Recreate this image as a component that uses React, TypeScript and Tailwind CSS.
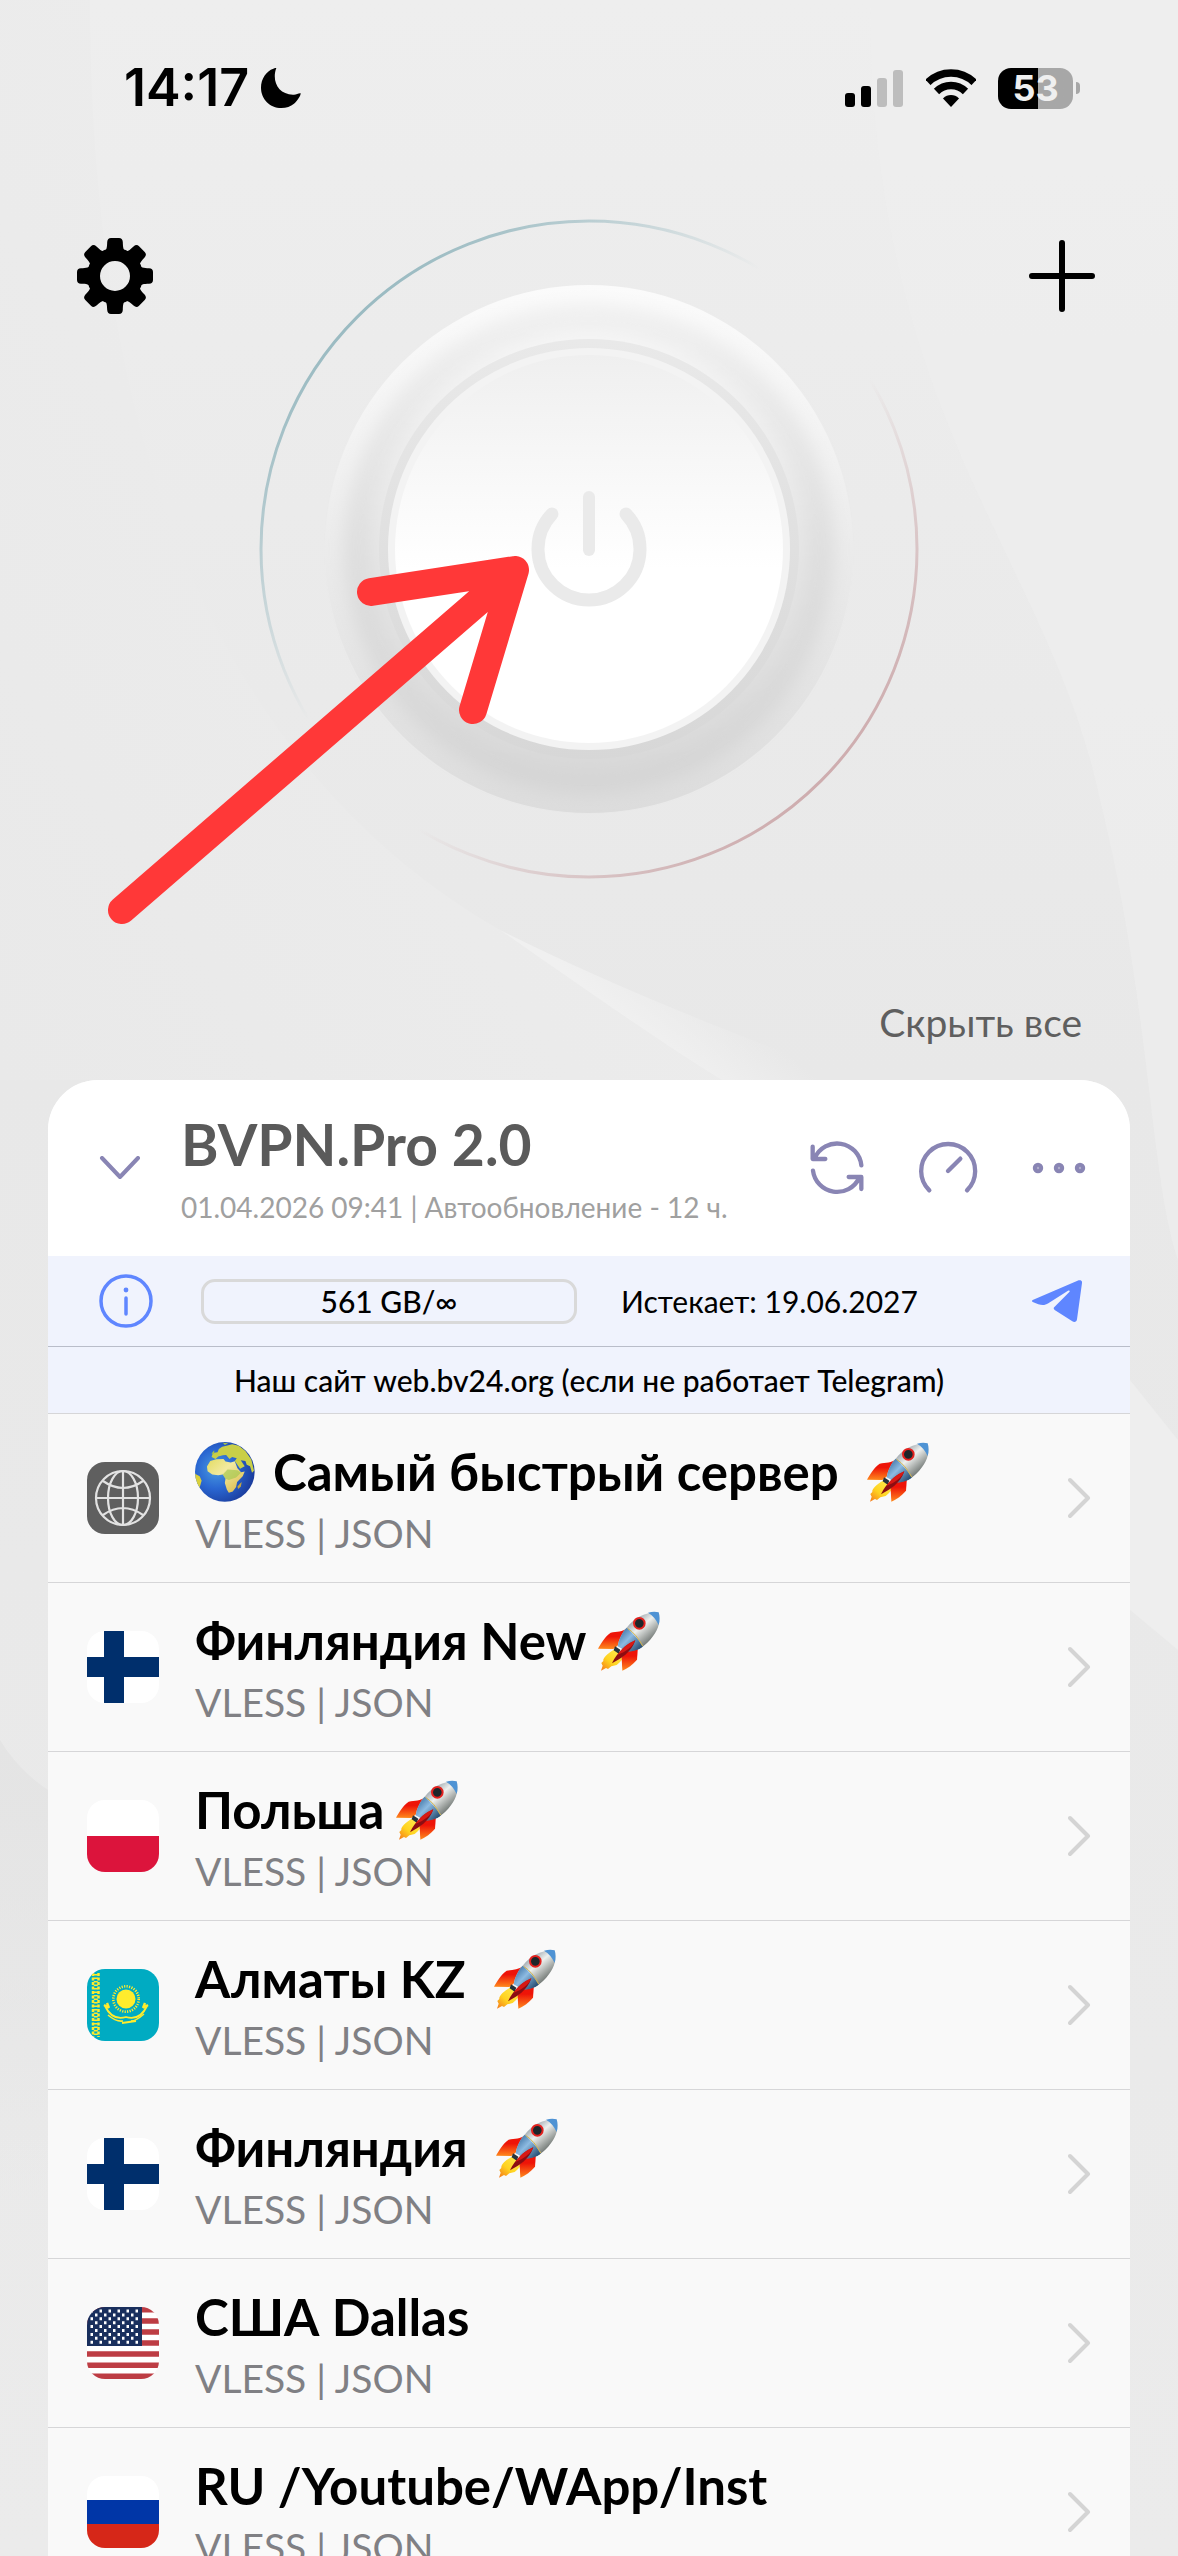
import type { ReactNode } from "react";

type FlagCode = "net" | "fi" | "pl" | "kz" | "us" | "ru";

type Server = {
  name: string;
  flag: FlagCode;
  globe?: boolean;
  rocket?: "near" | "far";
};

const servers: Server[] = [
  { name: "Самый быстрый сервер", flag: "net", globe: true, rocket: "far" },
  { name: "Финляндия New", flag: "fi", rocket: "near" },
  { name: "Польша", flag: "pl", rocket: "near" },
  { name: "Алматы KZ", flag: "kz", rocket: "far" },
  { name: "Финляндия", flag: "fi", rocket: "far" },
  { name: "США Dallas", flag: "us" },
  { name: "RU /Youtube/WApp/Inst", flag: "ru" },
];

export default function App() {
  return (
    <div className="relative isolate flex h-screen flex-col overflow-hidden bg-[#ebebeb] font-['Lato','Noto_Sans',sans-serif] text-black">
      <Backdrop />
      <StatusBar />

      <main className="flex min-h-0 flex-1 flex-col">
        <section className="grid grid-cols-[76px_1fr_76px] items-start px-[77px] pt-[43px]">
          <button aria-label="Настройки" className="mt-[19px]">
            <GearIcon />
          </button>
          <div className="relative mx-auto -mb-1 size-[660px]">
            <button aria-label="Подключить" className="block size-full rounded-full">
              <PowerDial />
            </button>
            <PointerArrow />
          </div>
          <button aria-label="Добавить" className="mt-[19px]">
            <svg className="h-[76px] w-[72px]" viewBox="0 0 72 76" stroke="#000" strokeWidth="6" strokeLinecap="round">
              <path d="M37 5v66M7 38h60" />
            </svg>
          </button>
        </section>

        <div className="flex justify-end px-24 pt-[121px] pb-8">
          <button className="text-[39px] leading-[52px] text-[#5f5f5f]">Скрыть все</button>
        </div>

        <section className="mx-12 flex min-h-0 flex-1 flex-col overflow-hidden rounded-t-[50px] bg-[#f9f9f9]">
          <SubscriptionHeader />
          <SubscriptionInfo />
          <ul>
            {servers.map((server, i) => (
              <ServerRow key={i} server={server} />
            ))}
          </ul>
        </section>
      </main>
    </div>
  );
}

function StatusBar() {
  return (
    <header className="flex h-44 items-center justify-between pr-[98px] pl-[124px]">
      <div className="flex items-center gap-3 font-['Inter',sans-serif] text-[52px] font-semibold">
        <span>14:17</span>
        <svg className="size-10" viewBox="603 54 120 120">
          <path d="M649 54C634 94 656 136 702 134C709 134 716 129 722 130C723 134 714 152 702 161C692 169 679 174 664 174C630 174 603 147 603 113C603 86 619 63 640 56C645 54 649 53 649 54Z" />
        </svg>
      </div>
      <div className="flex items-center">
        <svg className="h-[38px] w-[58px]" viewBox="0 0 58 38">
          <rect x="0" y="24" width="10" height="14" rx="3" />
          <rect x="16" y="17" width="10" height="21" rx="3" />
          <rect x="32" y="9" width="10" height="29" rx="3" fill="#bdbdbd" />
          <rect x="48" y="1" width="10" height="37" rx="3" fill="#bdbdbd" />
        </svg>
        <svg className="ml-[23px] h-[38px] w-[50px]" viewBox="0 0 50 38">
          <clipPath id="wifi">
            <path d="M25 38L-3 8V-6H53V8Z" />
          </clipPath>
          <g clipPath="url(#wifi)" fill="none" stroke="#000" strokeWidth="7.5">
            <circle cx="25" cy="37" r="33" />
            <circle cx="25" cy="37" r="20.5" />
            <circle cx="25" cy="37" r="11" fill="#000" stroke="none" />
          </g>
        </svg>
        <div className="ml-[22px] flex h-[41px] w-[75px] items-center justify-center rounded-[13px] bg-linear-to-r from-black from-53% to-[#a7a7a7] to-53% font-['Inter',sans-serif] text-4xl font-bold text-[#efefef]">
          53
        </div>
        <div className="ml-[3px] h-3 w-1 rounded-r-full bg-[#a7a7a7]" />
      </div>
    </header>
  );
}

function SubscriptionHeader() {
  return (
    <div className="flex h-44 shrink-0 items-center bg-white pr-[44px] pl-[51px]">
      <button aria-label="Свернуть">
        <svg className="h-6 w-[42px]" viewBox="0 0 42 24" fill="none" stroke="#8985b4" strokeWidth="4" strokeLinecap="round" strokeLinejoin="round">
          <path d="M3 2l18 19L39 2" />
        </svg>
      </button>
      <div className="ml-10 flex-1">
        <h1 className="text-[57px] leading-[66px] font-bold text-[#5a5a5a]">BVPN.Pro 2.0</h1>
        <p className="mt-3 text-[28px] leading-9 text-[#a0a0a0]">01.04.2026 09:41 | Автообновление - 12 ч.</p>
      </div>
      <div className="flex items-center gap-[54px]">
        <button aria-label="Обновить">
          <svg className="size-[54px]" viewBox="207 153 162 162" fill="none" stroke="#8985b4" strokeWidth="13" strokeLinecap="round" strokeLinejoin="round">
            <path d="M361 226A73 73 0 0 0 221.600 204M215 170v37h38M216 242A73 73 0 0 0 354.400 264M361 297v-36h-38" />
          </svg>
        </button>
        <button aria-label="Проверить скорость">
          <svg className="size-[60px]" viewBox="531 144 180 180" fill="none" stroke="#8985b4" strokeWidth="13" strokeLinecap="round">
            <path d="M565 301A81 81 0 1 1 678 301M621 243l37-37" />
          </svg>
        </button>
        <button aria-label="Ещё">
          <svg className="h-3 w-[54px]" viewBox="0 0 54 12" fill="#aeabca" stroke="#8985b4" strokeWidth="4">
            <circle cx="6" cy="6" r="3.200" />
            <circle cx="27" cy="6" r="3.200" />
            <circle cx="48" cy="6" r="3.200" />
          </svg>
        </button>
      </div>
    </div>
  );
}

function SubscriptionInfo() {
  return (
    <div className="shrink-0 bg-[#f0f3fd] text-[30px]">
      <div className="flex h-[91px] items-center border-b border-[#b9bdc9] pr-12 pl-[51px]">
        <button aria-label="Информация">
          <svg className="size-[54px]" viewBox="0 0 54 54" fill="none" stroke="#5f86ff" strokeWidth="3.5" strokeLinecap="round">
            <circle cx="27" cy="27" r="25" />
            <path d="M27 24v16" />
            <circle cx="27" cy="16" r="2.4" fill="#5f86ff" stroke="none" />
          </svg>
        </button>
        <div className="ml-12 flex h-[45px] w-[376px] items-center justify-center rounded-[14px] border-3 border-[#d9d9d9] font-medium">
          561 GB/∞
        </div>
        <span className="ml-11 flex-1">Истекает: 19.06.2027</span>
        <a href="#telegram" aria-label="Telegram">
          <svg className="h-[42px] w-[50px]" viewBox="876 570 150 126" fill="#5f86ff">
            <path d="M878 630L1016 571C1023 569 1027 573 1026 579L1011 688C1010 696 1003 698 997 694L944 660C940 656 940 653 944 650L988 606C991 602 988 600 984 602L925 640C915 647 905 646 895 643L880 637C875 635 875 632 878 630Z" />
          </svg>
        </a>
      </div>
      <p className="h-[66px] text-center leading-[66px] font-medium">
        Наш сайт web.bv24.org (если не работает Telegram)
      </p>
    </div>
  );
}

function ServerRow({ server }: { server: Server }) {
  return (
    <li className="border-t border-[#d6d6d8]">
      <button className="flex h-[168px] w-full items-center px-[39px] text-left">
        <Flag code={server.flag} />
        <div className="ml-9 flex-1">
          <div className="flex h-16 items-center text-[51px] leading-[64px] font-bold whitespace-nowrap">
            {server.globe && <GlobeEmoji />}
            <span>{server.name}</span>
            {server.rocket && <RocketEmoji far={server.rocket === "far"} />}
          </div>
          <div className="mt-1.5 text-[39px] leading-[46px] text-[#808084]">VLESS | JSON</div>
        </div>
        <svg className="h-[42px] w-[23px]" viewBox="0 0 23 42" fill="none" stroke="#d4d4d4" strokeWidth="4" strokeLinecap="round" strokeLinejoin="round">
          <path d="M2 3l18 18L2 39" />
        </svg>
      </button>
    </li>
  );
}

const flags: Record<FlagCode, ReactNode> = {
  net: (
    <>
      <path fill="#5f5f5f" d="M0 0h72v72H0z" />
      <g fill="none" stroke="#e2e2e2" strokeWidth="2.2">
        <circle cx="36" cy="36" r="27" />
        <ellipse cx="36" cy="36" rx="15" ry="27" />
        <path d="M36 9v54M9 36h54M16 19q20 14 40 0M16 53q20-14 40 0" />
      </g>
    </>
  ),
  fi: (
    <>
      <path fill="#fff" d="M0 0h72v72H0z" />
      <path fill="#002f6c" d="M17 0h20v72H17zM0 26h72v20H0z" />
    </>
  ),
  pl: (
    <>
      <path fill="#fff" d="M0 0h72v36H0z" />
      <path fill="#dc143c" d="M0 36h72v36H0z" />
    </>
  ),
  kz: (
    <>
      <path fill="#00abc2" d="M0 0h72v72H0z" />
      <g fill="none" stroke="#ffec2d">
        <path d="M6 4v64M11.500 4v64" strokeWidth="2.500" strokeDasharray="3 1.500" />
        <path d="M8.800 5v62" strokeWidth="4" strokeDasharray="1.500 2" />
        <circle cx="39" cy="30" r="9.500" fill="#ffec2d" stroke="none" />
        <circle cx="39" cy="30" r="12.700" strokeWidth="2.600" strokeDasharray="1.200 1.300" />
        <path d="M18 37q7 15 21 11q14 4 21-11" strokeWidth="1.800" />
        <path d="M21 46q8 7 15 6M57 45q-8 7-13 7" strokeWidth="1.500" />
        <path d="M17 36l5 3M20 34l2 5M61 36l-5 3M58 34l-2 5" strokeWidth="2.400" />
        <path d="M35 54l14-2" strokeWidth="2" />
      </g>
    </>
  ),
  us: (
    <>
      <path fill="#fff" d="M0 0h72v72H0z" />
      <path stroke="#bd3d44" strokeWidth="5.540" d="M0 2.800h72M0 13.900h72M0 25h72M0 36h72M0 47.100h72M0 58.200h72M0 69.200h72" />
      <path fill="#192f5d" d="M0 0h55v39H0z" />
      <g stroke="#fff" strokeWidth="3" strokeDasharray="2.500 6.500">
        <path d="M3.500 4h49M3.500 11.800h49M3.500 19.600h49M3.500 27.400h49M3.500 35.200h49" />
        <path d="M8 7.900h42M8 15.700h42M8 23.500h42M8 31.300h42" />
      </g>
    </>
  ),
  ru: (
    <>
      <path fill="#fff" d="M0 0h72v24H0z" />
      <path fill="#0036a7" d="M0 24h72v24H0z" />
      <path fill="#d62718" d="M0 48h72v24H0z" />
    </>
  ),
};

function Flag({ code }: { code: FlagCode }) {
  return (
    <svg className="size-[72px] rounded-[18px]" viewBox="0 0 72 72">
      {flags[code]}
    </svg>
  );
}

function GearIcon() {
  return (
    <svg className="size-[76px]" viewBox="-38 -38 76 76">
      <circle r="21.500" fill="none" stroke="#000" strokeWidth="13" />
      {[0, 45, 90, 135, 180, 225, 270, 315].map((angle) => (
        <path key={angle} transform={`rotate(${angle})`} d="M-12-24C-8-25-8-29-7.800-34Q-7.500-38-4-38H4Q7.500-38 7.800-34C8-29 8-25 12-24Z" />
      ))}
    </svg>
  );
}

function PowerDial() {
  return (
    <svg className="size-full" viewBox="0 0 660 660" fill="none">
      <defs>
        <linearGradient id="teal" gradientUnits="userSpaceOnUse" x1="275" y1="275" x2="98" y2="98">
          <stop stopColor="#9bbbc2" stopOpacity="0" />
          <stop offset="1" stopColor="#9bbbc2" />
        </linearGradient>
        <linearGradient id="rose" gradientUnits="userSpaceOnUse" x1="385" y1="385" x2="562" y2="562">
          <stop stopColor="#ceadaf" stopOpacity="0" />
          <stop offset="1" stopColor="#ceadaf" />
        </linearGradient>
        <linearGradient id="rim" x1="0" y1="0" x2="0" y2="1">
          <stop stopColor="#fbfbfb" />
          <stop offset=".25" stopColor="#f4f4f4" />
          <stop offset=".5" stopColor="#ebebeb" />
          <stop offset="1" stopColor="#dcdcdc" />
        </linearGradient>
        <linearGradient id="slope" x1="0" y1="0" x2="0" y2="1">
          <stop stopColor="#f1f1f1" />
          <stop offset=".5" stopColor="#dfdfdf" />
          <stop offset="1" stopColor="#d5d5d5" />
        </linearGradient>
        <linearGradient id="inner" x1="0" y1="0" x2="0" y2="1">
          <stop stopColor="#f6f6f6" />
          <stop offset=".5" stopColor="#e6e6e6" />
          <stop offset="1" stopColor="#d9d9d9" />
        </linearGradient>
        <linearGradient id="groove" x1="0" y1="0" x2="0" y2="1">
          <stop stopColor="#e9e9e9" />
          <stop offset="1" stopColor="#d7d7d7" />
        </linearGradient>
        <linearGradient id="cap" x1="0" y1="0" x2="0" y2="1">
          <stop stopColor="#efefef" />
          <stop offset=".55" stopColor="#fff" />
        </linearGradient>
        <filter id="soft">
          <feGaussianBlur stdDeviation="8" />
        </filter>
      </defs>
      <circle cx="330" cy="330" r="328" stroke="url(#teal)" strokeWidth="3" />
      <circle cx="330" cy="330" r="328" stroke="url(#rose)" strokeWidth="3" />
      <circle cx="330" cy="330" r="264" fill="url(#rim)" />
      <circle cx="330" cy="330" r="246" fill="url(#slope)" filter="url(#soft)" />
      <circle cx="330" cy="330" r="218" fill="url(#inner)" filter="url(#soft)" />
      <circle cx="330" cy="330" r="210" fill="url(#groove)" />
      <circle cx="330" cy="330" r="201" fill="#f3f3f3" />
      <circle cx="330" cy="330" r="194" fill="url(#cap)" />
      <path d="M293 295A51 51 0 1 0 367 295" stroke="#eaeaea" strokeWidth="13" strokeLinecap="round" />
      <path d="M330 278v53" stroke="#eaeaea" strokeWidth="12" strokeLinecap="round" />
    </svg>
  );
}

function PointerArrow() {
  return (
    <svg
      className="pointer-events-none absolute top-[320px] -left-[160px] h-[400px] w-[440px]"
      viewBox="0 0 440 400"
      fill="none"
      stroke="#ff3838"
      strokeWidth="28"
      strokeLinecap="round"
      strokeLinejoin="round"
    >
      <path d="M23 371L416 31M272 53L416 31L374 171" />
    </svg>
  );
}

function GlobeEmoji() {
  return (
    <svg className="mr-[18px] size-[60px]" viewBox="380 39 181 181">
      <defs>
        <radialGradient id="ocean" cx=".35" cy=".45" r=".65">
          <stop stopColor="#4a9ce0" />
          <stop offset=".5" stopColor="#2a67d2" />
          <stop offset="1" stopColor="#1b3c9c" />
        </radialGradient>
        <linearGradient id="land" x1="0" y1="0" x2="1" y2="1">
          <stop stopColor="#e3dc62" />
          <stop offset=".4" stopColor="#f2eaa0" />
          <stop offset="1" stopColor="#d9b440" />
        </linearGradient>
        <clipPath id="earth">
          <circle cx="470" cy="129" r="90" />
        </clipPath>
      </defs>
      <g clipPath="url(#earth)">
        <path fill="url(#ocean)" d="M380 39h181v181H380z" />
        <path fill="url(#land)" d="M426 96L444 91L466 90L472 98L488 101L500 97L508 118L519 130L530 128L524 142L507 160L504 175L494 188L482 192L476 182L470 163L472 150L464 137L450 139L432 137L418 127L416 113Z" />
        <path fill="#9bc64a" opacity=".6" d="M464 137L478 122L508 124L519 132L504 146L482 154L472 150Z" />
        <path fill="#c9cf48" d="M430 84L434 72L448 70L452 60L462 53L475 50L492 46L512 50L532 66L550 92L558 126L552 132L546 112L536 108L532 96L518 94L530 112L516 120L500 96L506 88L492 84L484 90L474 78L464 79L450 83L442 90Z" />
        <path fill="#c8a63c" d="M516 164L521 160L518 174L510 181L508 173Z" />
        <path fill="#d9d03c" d="M378 134L394 142L400 156L394 176L386 180Z" />
        <path fill="#a7c549" d="M438 64L430 74L438 76ZM464 41L480 43L470 48Z" />
      </g>
    </svg>
  );
}

function RocketEmoji({ far }: { far: boolean }) {
  return (
    <svg className={far ? "ml-7 h-[60px] w-[62px]" : "ml-3 h-[60px] w-[62px]"} viewBox="42 42 186 180">
      <defs>
        <linearGradient id="hull" gradientUnits="userSpaceOnUse" x1="135" y1="70" x2="190" y2="135">
          <stop stopColor="#8f9aa3" />
          <stop offset=".45" stopColor="#eef0ee" />
          <stop offset="1" stopColor="#7b817e" />
        </linearGradient>
        <linearGradient id="steel" gradientUnits="userSpaceOnUse" x1="108" y1="110" x2="160" y2="160">
          <stop stopColor="#4c7fae" />
          <stop offset=".4" stopColor="#8dbbe2" />
          <stop offset="1" stopColor="#2c5379" />
        </linearGradient>
        <linearGradient id="fin" x1="0" y1="0" x2="0" y2="1">
          <stop offset=".4" stopColor="#ee1408" />
          <stop offset="1" stopColor="#ff8a1c" />
        </linearGradient>
        <linearGradient id="flame" x1="1" y1="0" x2="0" y2="1">
          <stop stopColor="#fff05a" />
          <stop offset=".6" stopColor="#ffd21f" />
          <stop offset="1" stopColor="#f5761a" />
        </linearGradient>
      </defs>
      <path fill="url(#flame)" d="M90 158C72 168 56 182 58 192L52 198L56 206L51 221L66 213L72 216L82 208L98 204C112 192 120 182 122 170Z" />
      <path fill="url(#fin)" d="M130 94C116 104 98 105 80 107C64 118 50 140 42 155L88 156L104 144Z" />
      <path fill="url(#fin)" d="M162 148L159 188C148 202 130 214 115 221L113 182L126 166Z" />
      <path fill="url(#hull)" d="M224 46C232 75 222 105 190 137C172 155 150 163 128 163L101 148C104 128 115 105 128 92C150 62 190 42 224 46Z" />
      <path fill="url(#steel)" d="M128 92C142 104 160 122 176 149C162 160 144 164 128 163L101 148C104 128 115 105 128 92Z" />
      <path fill="#4f93d4" d="M192 47Q210 42 224 46Q229 62 224 84Q212 58 192 47Z" />
      <path fill="none" stroke="#d3b54c" strokeWidth="3" d="M131 94Q158 112 176 147" />
      <path fill="#25333b" d="M93 148L109 158L104 170L89 160Z" />
      <path fill="#8c0d12" d="M154 130C124 144 98 168 84 199C112 184 142 166 154 130Z" />
      <path fill="#d81914" d="M154 130C132 138 112 156 100 174C126 164 146 150 154 130Z" />
      <circle cx="166" cy="79" r="16" fill="#1d262b" stroke="#e3221f" strokeWidth="6" />
    </svg>
  );
}

// soft waves behind the whole screen
function Backdrop() {
  return (
    <svg className="absolute inset-0 -z-10 size-full" viewBox="0 0 1178 2556" preserveAspectRatio="none">
      <defs>
        <linearGradient id="sky" x1="0" y1="0" x2="0" y2="1">
          <stop stopColor="#eeeeee" />
          <stop offset=".2" stopColor="#ebebeb" />
          <stop offset=".42" stopColor="#e8e8e8" />
          <stop offset="1" stopColor="#ebebeb" />
        </linearGradient>
        <linearGradient id="left" x1="1" y1="0" x2="0" y2="1">
          <stop stopColor="#eeeeee" />
          <stop offset="1" stopColor="#e9e9e9" />
        </linearGradient>
        <linearGradient id="fold" gradientUnits="userSpaceOnUse" x1="650" y1="1040" x2="700" y2="980">
          <stop stopColor="#f0f0f0" />
          <stop offset="1" stopColor="#f0f0f0" stopOpacity="0" />
        </linearGradient>
        <linearGradient id="shade" x1="0" y1="0" x2="0" y2="1">
          <stop stopColor="#e4e4e4" />
          <stop offset="1" stopColor="#e4e4e4" stopOpacity="0" />
        </linearGradient>
      </defs>
      <path fill="url(#sky)" d="M0 0h1178v2556H0z" />
      <path fill="url(#left)" d="M0 0H90C90 480 240 780 500 930C600 1000 680 1055 722 1080H0Z" />
      <path fill="url(#fold)" d="M500 930C600 1000 680 1055 722 1080H860C720 1030 600 980 500 930Z" />
      <path fill="#eeeeee" d="M870 0C870 420 1050 560 1100 800C1150 1000 1150 1180 1178 1260V0Z" opacity=".6" />
      <path fill="#eeeeee" d="M1130 1380L1178 1440V1650L1130 1610Z" />
      <path fill="url(#shade)" d="M0 1740Q18 1770 48 1790V2200H0Z" />
    </svg>
  );
}
